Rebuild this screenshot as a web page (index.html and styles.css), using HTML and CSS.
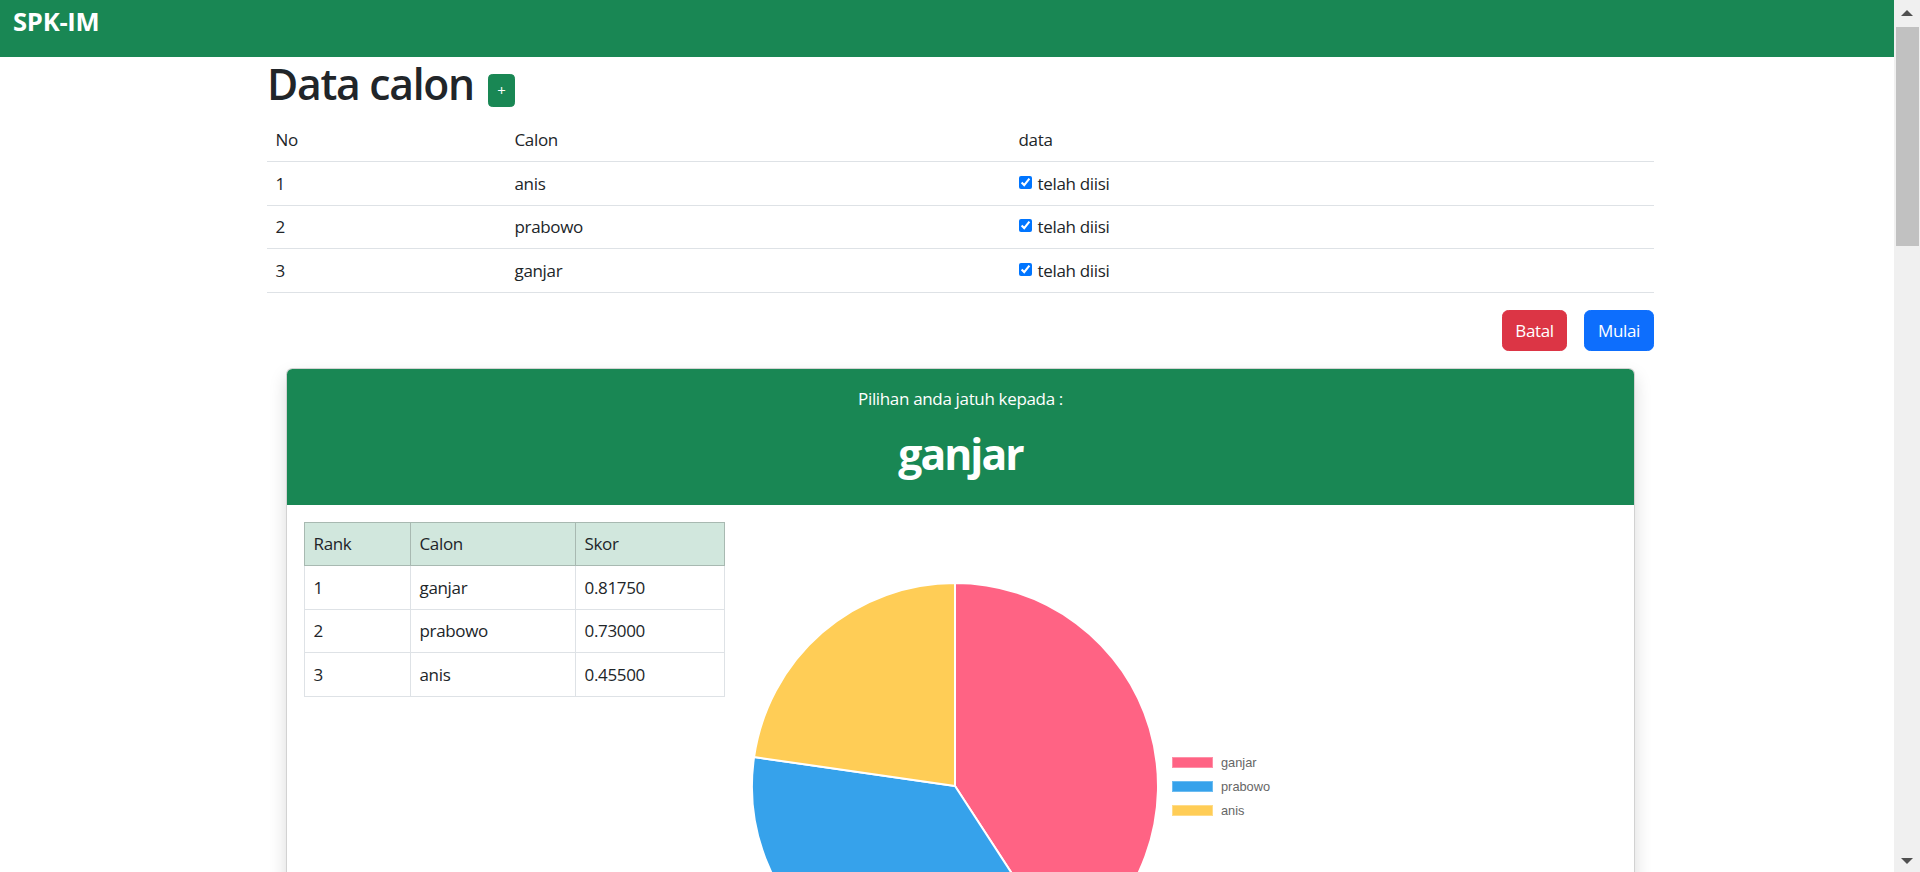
FILE: index.html
```html
<!DOCTYPE html>
<html lang="id">
<head>
<meta charset="utf-8">
<title>SPK-IM</title>
<link rel="stylesheet" href="styles.css">
</head>
<body>
<div class="app">
  <div class="viewport">
    <nav class="navbar"><span class="brand">SPK-IM</span></nav>
    <main class="container">
      <h1 class="title">Data calon <button class="btn-add">+</button></h1>
      <table class="data-table">
        <colgroup><col class="c-no"><col class="c-calon"><col class="c-data"></colgroup>
        <thead><tr><th>No</th><th>Calon</th><th>data</th></tr></thead>
        <tbody>
          <tr><td>1</td><td>anis</td><td><label class="check"><input type="checkbox" checked> telah diisi</label></td></tr>
          <tr><td>2</td><td>prabowo</td><td><label class="check"><input type="checkbox" checked> telah diisi</label></td></tr>
          <tr><td>3</td><td>ganjar</td><td><label class="check"><input type="checkbox" checked> telah diisi</label></td></tr>
        </tbody>
      </table>
      <div class="actions">
        <button class="btn btn-danger">Batal</button>
        <button class="btn btn-primary">Mulai</button>
      </div>
      <section class="card">
        <header class="card-header">
          <p class="lead-text">Pilihan anda jatuh kepada :</p>
          <h1 class="winner">ganjar</h1>
        </header>
        <div class="card-body">
          <table class="rank-table">
            <colgroup><col class="c-rank"><col class="c-rcalon"><col class="c-skor"></colgroup>
            <thead><tr><th>Rank</th><th>Calon</th><th>Skor</th></tr></thead>
            <tbody>
              <tr><td>1</td><td>ganjar</td><td>0.81750</td></tr>
              <tr><td>2</td><td>prabowo</td><td>0.73000</td></tr>
              <tr><td>3</td><td>anis</td><td>0.45500</td></tr>
            </tbody>
          </table>
          <svg class="chart" width="600" height="430" viewBox="0 0 600 430">
            <g stroke="#fff" stroke-width="2" stroke-linejoin="round">
              <path d="M210 213 L210 10 A203 203 0 0 1 320.66 383.19 Z" fill="#ff6384"/>
              <path d="M210 213 L320.66 383.19 A203 203 0 0 1 9.07 184.05 Z" fill="#36a2eb"/>
              <path d="M210 213 L9.07 184.05 A203 203 0 0 1 210 10 Z" fill="#ffcd56"/>
            </g>
            <g class="legend">
              <rect x="427.5" y="184.5" width="40" height="10" fill="#ff6384" stroke="#ff90a8" stroke-width="1"/>
              <rect x="427.5" y="208.5" width="40" height="10" fill="#36a2eb" stroke="#6cbcf1" stroke-width="1"/>
              <rect x="427.5" y="232.5" width="40" height="10" fill="#ffcd56" stroke="#ffdc89" stroke-width="1"/>
              <text x="476" y="194">ganjar</text>
              <text x="476" y="218">prabowo</text>
              <text x="476" y="242">anis</text>
            </g>
          </svg>
        </div>
      </section>
    </main>
  </div>
  <div class="scrollbar">
    <div class="sb-btn sb-up"><svg width="26" height="27" viewBox="0 0 26 27"><path d="M7 16 L13 10 L19 16 Z" fill="#505050"/></svg></div>
    <div class="sb-thumb"></div>
    <div class="sb-track"></div>
    <div class="sb-btn sb-down"><svg width="26" height="27" viewBox="0 0 26 27"><path d="M7 13 L13 19 L19 13 Z" fill="#505050"/></svg></div>
  </div>
</div>
</body>
</html>
```

FILE: styles.css
```css
* { box-sizing: border-box; }

html, body {
  margin: 0;
  height: 872px;
  overflow: hidden;
}

body {
  font-family: "Open Sans", "Noto Sans", sans-serif;
  font-size: 17px;
  line-height: 1.5;
  color: #212529;
  letter-spacing: -0.02em;
  background: #fff;
}

.app {
  display: flex;
  height: 872px;
}

.viewport {
  flex: 1;
  min-width: 0;
  overflow: hidden;
}

/* navbar */
.navbar {
  height: 57px;
  background: #198754;
  padding: 9px 13px 0;
}

.brand {
  display: inline-block;
  font-size: 25.6px;
  line-height: 25.6px;
  font-weight: 700;
  color: #fff;
  letter-spacing: -0.01em;
}

/* main container */
.container {
  width: 1387px;
  margin-left: 267px;
}

.title {
  margin: 1px 0 9.5px;
  font-size: 42.67px;
  line-height: 51.2px;
  font-weight: 600;
  letter-spacing: -0.03em;
}

.btn-add {
  display: inline-block;
  vertical-align: 3.6px;
  height: 33px;
  padding: 0 8.5px;
  margin-left: 4px;
  font-family: inherit;
  font-size: 15px;
  font-weight: 400;
  line-height: 31px;
  letter-spacing: 0;
  color: #fff;
  background: #198754;
  border: 1px solid #198754;
  border-radius: 4.3px;
}

/* data table */
.data-table {
  width: 100%;
  border-collapse: collapse;
  table-layout: fixed;
}

.c-no { width: 239px; }
.c-calon { width: 504px; }
.c-data { width: 644px; }

.data-table th,
.data-table td {
  padding: 8.5px;
  text-align: left;
  font-weight: 400;
  line-height: 25.5px;
  border-bottom: 1px solid #dee2e6;
}

.check input {
  width: 13px;
  height: 13px;
  margin: 0 2px 0 0;
  vertical-align: 1px;
}

/* action buttons */
.actions {
  display: flex;
  justify-content: flex-end;
  gap: 17px;
  margin-top: 17px;
}

.btn {
  height: 41px;
  padding: 0;
  font-family: inherit;
  font-size: 17px;
  letter-spacing: -0.02em;
  line-height: 39px;
  color: #fff;
  border-radius: 6.4px;
  border: 1px solid transparent;
  text-align: center;
}

.btn-danger { width: 65px; background: #dc3545; border-color: #dc3545; }
.btn-primary { width: 70px; background: #0d6efd; border-color: #0d6efd; }

/* result card */
.card {
  margin: 17px 19px 0;
  border: 1px solid rgba(0, 0, 0, 0.175);
  border-radius: 6.4px;
  box-shadow: 0 8.5px 17px rgba(0, 0, 0, 0.15);
  background: #fff;
}

.card-header {
  background: #198754;
  color: #fff;
  text-align: center;
  padding: 17px 17px 17px;
  border-radius: 5.4px 5.4px 0 0;
}

.lead-text {
  margin: 0 0 17px;
  line-height: 25.5px;
}

.winner {
  margin: 0 0 8.5px;
  font-size: 42.67px;
  line-height: 51.2px;
  font-weight: 700;
  letter-spacing: -0.045em;
}

.card-body {
  display: flex;
  align-items: flex-start;
  padding: 17px;
}

.rank-table {
  flex: 0 0 420px;
  width: 420px;
  border-collapse: collapse;
  table-layout: fixed;
}

.c-rank { width: 106px; }
.c-rcalon { width: 165px; }
.c-skor { width: 149px; }

.rank-table th,
.rank-table td {
  padding: 8.5px;
  text-align: left;
  font-weight: 400;
  line-height: 25.5px;
  border: 1px solid #dee2e6;
}

.rank-table th {
  background: #d1e7dd;
  border-color: #a8b9b1;
}

.chart {
  flex: 0 0 auto;
  margin: 51px 0 0 20px;
  display: block;
}

.legend text {
  font-family: "Liberation Sans", Arial, sans-serif;
  font-size: 12.8px;
  fill: #666;
  letter-spacing: 0;
}

/* scrollbar */
.scrollbar {
  flex: 0 0 26px;
  width: 26px;
  height: 872px;
  background: #f0f0f0;
  display: flex;
  flex-direction: column;
}

.sb-btn { height: 27px; flex: 0 0 27px; }
.sb-btn svg { display: block; }

.sb-thumb {
  flex: 0 0 219px;
  margin: 0 1px 0 2px;
  background: #c1c1c1;
}

.sb-track { flex: 1; }
```
